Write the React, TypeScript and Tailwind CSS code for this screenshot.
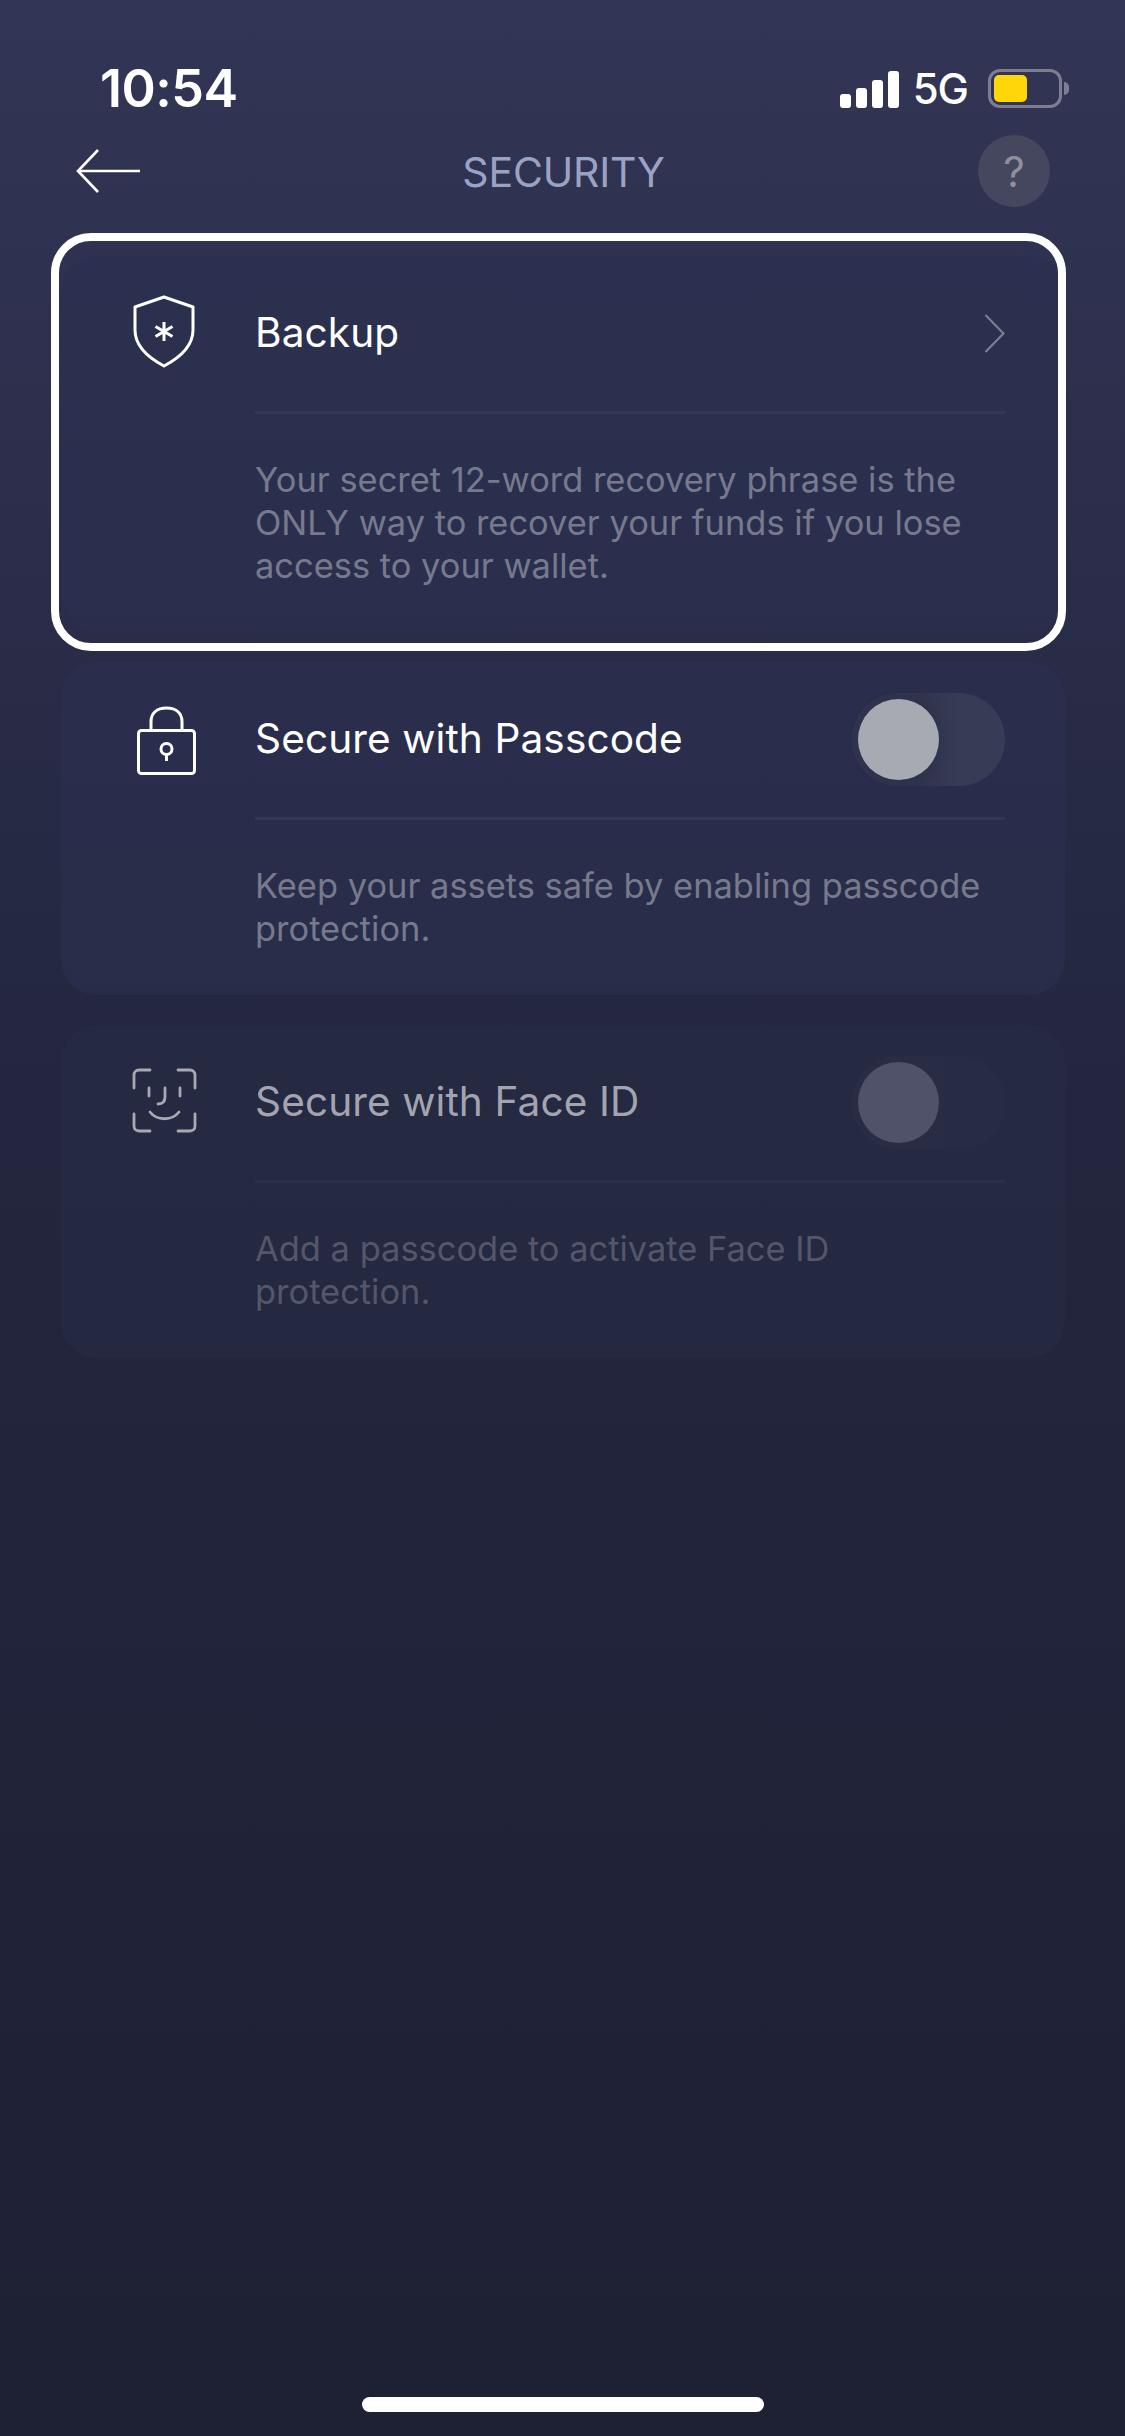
import React from "react";

function BackArrow() {
  return (
    <svg width="65" height="44" viewBox="0 0 65 44" fill="none" stroke="#ffffff" strokeWidth="2.6">
      <path d="M22 1 L2 22 L22 43" />
      <path d="M2 22 H64" />
    </svg>
  );
}

function ChevronIcon() {
  return (
    <svg width="21" height="39" viewBox="0 0 21 39" fill="none" stroke="#7c7e90" strokeWidth="2.2">
      <path d="M1.5 1 L19.5 19.5 L1.5 38" />
    </svg>
  );
}

function ShieldIcon() {
  return (
    <svg width="62" height="73" viewBox="0 0 62 73" fill="none" stroke="#ffffff" strokeWidth="3" strokeLinejoin="round">
      <path d="M31 2 L60 12 V35 C60 50 48 62 31 71 C14 62 2 50 2 35 V12 Z" />
      <path d="M31 27 V46 M22.5 31.5 L39.5 41.5 M39.5 31.5 L22.5 41.5" />
    </svg>
  );
}

function LockIcon() {
  return (
    <svg className="mt-[6px] ml-[5px]" width="60" height="70" viewBox="0 0 60 70" fill="none" stroke="#ffffff" strokeWidth="3">
      <rect x="1.5" y="24.5" width="56" height="43" rx="3" />
      <path d="M14 24 V16 C14 7 20 2 29.5 2 C39 2 45 7 45 16 V24" />
      <circle cx="29.5" cy="43" r="5.5" />
      <path d="M29.5 48.5 V55" />
    </svg>
  );
}

function FaceIcon() {
  return (
    <svg width="65" height="65" viewBox="0 0 65 65" fill="none" stroke="#ffffff" strokeWidth="2.8" strokeLinecap="round">
      <path d="M2 20 V7 C2 4 4 2 7 2 H18" />
      <path d="M46 2 H58 C61 2 63 4 63 7 V20" />
      <path d="M2 46 V58 C2 61 4 63 7 63 H18" />
      <path d="M46 63 H58 C61 63 63 61 63 58 V46" />
      <path d="M17 20 V28 M48 20 V28" />
      <path d="M33 20 V29 C33 34 30 36 26 36" />
      <path d="M18 44 C25 53 40 53 47 44" />
    </svg>
  );
}

function Toggle({ dim }: { dim?: boolean }) {
  return (
    <div
      className={`flex h-[93px] w-[153px] items-center rounded-full pl-[6px] ${
        dim
          ? "bg-linear-to-r from-[#282c44] from-45% to-[#272c45] to-70%"
          : "bg-linear-to-r from-[#31344e] from-45% to-[#383b56] to-70%"
      }`}
    >
      <div
        className={`h-[81px] w-[81px] rounded-full ${
          dim ? "bg-[#50526a]" : "bg-[#a8aab3] shadow-[2px_0_14px_rgba(0,0,0,0.1)]"
        }`}
      />
    </div>
  );
}

interface CardProps {
  icon: React.ReactNode;
  title: string;
  lines: string;
  action: React.ReactNode;
  dim?: boolean;
  highlighted?: boolean;
}

function Card({ icon, title, lines, action, dim, highlighted }: CardProps) {
  return (
    <div className={`relative rounded-[36px] pb-[45px] ${dim ? "bg-[#272b44]/60" : "bg-[#2c3050]/60"}`}>
      {highlighted && (
        <div className="absolute -top-[23px] -right-px -bottom-[19px] -left-[10px] rounded-[40px] border-[8px] border-white" />
      )}
      <div className="flex h-[155px] items-center pr-[60px]">
        <div className={`flex w-[194px] justify-center pb-[4px] pl-[12px] ${dim ? "opacity-60" : ""}`}>{icon}</div>
        <div className={`flex-1 text-[40.6px] tracking-[0.1px] ${dim ? "text-[#a2a4b0]" : "text-white"}`}>{title}</div>
        {action}
      </div>
      <div className={`mr-[60px] ml-[194px] h-[3px] ${dim ? "bg-[#32354f]/50" : "bg-[#383b58]/70"}`} />
      <p
        className={`mt-[44px] mr-[60px] ml-[194px] text-[34.45px] leading-[43px] ${
          dim ? "text-[#54566b]" : "text-[#777a8d]"
        }`}
      >
        {lines}
      </p>
    </div>
  );
}

export default function App() {
  return (
    <div className="flex h-[2436px] w-[1125px] flex-col bg-linear-to-b from-[#333556] via-[#23263e] via-45% to-[#1e2034] font-[Inter,sans-serif]">
      <div className="mt-[69px] flex h-[39px] items-center justify-between pr-[56px] pl-[100px] text-white">
        <span className="text-[52px] leading-none font-semibold tracking-[-0.5px]">10:54</span>
        <div className="flex items-center">
          <div className="flex h-[38px] items-end gap-[5px]">
            <div className="h-[14px] w-[11px] rounded-[3px] bg-white" />
            <div className="h-[20px] w-[11px] rounded-[3px] bg-white" />
            <div className="h-[28px] w-[11px] rounded-[3px] bg-white" />
            <div className="h-[37px] w-[11px] rounded-[3px] bg-white" />
          </div>
          <span className="ml-[14px] text-[42px] leading-none font-medium tracking-[-1px]">5G</span>
          <div className="ml-[20px] flex h-[39px] w-[74px] items-center rounded-[12px] border-[3px] border-[#7d7e92] pl-[3px]">
            <div className="h-[27px] w-[33px] rounded-[5px] bg-[#ffd60a]" />
          </div>
          <div className="ml-[2px] h-[13px] w-[5px] rounded-r-full bg-[#7d7e92]" />
        </div>
      </div>

      <div className="mt-[27px] flex h-[72px] items-center pr-[75px] pl-[76px]">
        <BackArrow />
        <div className="flex-1 pt-[4px] pl-[8px] text-center text-[41px] tracking-[-0.2px] text-[#9aa3c4]">SECURITY</div>
        <div className="flex h-[72px] w-[72px] items-center justify-center rounded-full bg-[#45475f] text-[42px] text-[#8e8f9f]">
          ?
        </div>
      </div>

      <div className="mt-[49px] mr-[60px] ml-[61px] flex flex-col gap-[30px]">
        <Card
          highlighted
          icon={<ShieldIcon />}
          title="Backup"
          lines="Your secret 12-word recovery phrase is the ONLY way to recover your funds if you lose access to your wallet."
          action={<ChevronIcon />}
        />
        <Card
          icon={<LockIcon />}
          title="Secure with Passcode"
          lines="Keep your assets safe by enabling passcode protection."
          action={<Toggle />}
        />
        <Card
          dim
          icon={<FaceIcon />}
          title="Secure with Face ID"
          lines="Add a passcode to activate Face ID protection."
          action={<Toggle dim />}
        />
      </div>

      <div className="mt-auto mb-[24px] h-[15px] w-[402px] self-center rounded-full bg-white" />
    </div>
  );
}
